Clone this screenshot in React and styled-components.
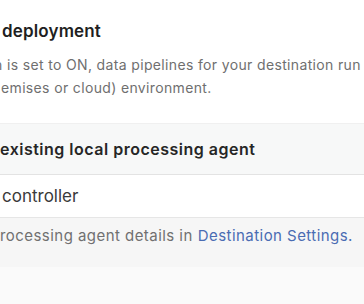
import React from "react";
import styled, { createGlobalStyle } from "styled-components";

const Global = createGlobalStyle`
  html, body { margin: 0; padding: 0; background: #ffffff; }
  body { width: 364px; height: 304px; overflow: hidden; font-family: Inter, "Noto Sans", sans-serif; -webkit-font-smoothing: antialiased; }
`;

const Page = styled.div`
  display: flex;
  flex-direction: column;
  width: 364px;
  height: 304px;
  overflow: hidden;
  background: #fafafa;
`;

const Intro = styled.section`
  background: #ffffff;
  padding: 20px 0 0 0;
  height: 103px;
`;

const Title = styled.h2`
  margin: 0 0 0 2px;
  font-size: 17px;
  line-height: 22px;
  font-weight: 600;
  letter-spacing: 0.15px;
  color: #1f1f1f;
  white-space: nowrap;
`;

const Paragraph = styled.p`
  margin: 11px 0 0 0;
  font-size: 14px;
  line-height: 23px;
  letter-spacing: 0.35px;
  color: #6f6f6f;
  white-space: nowrap;
`;

const Line = styled.span`
  display: block;
  margin-left: ${(p) => p.$indent || 0}px;
`;

const Card = styled.section`
  display: flex;
  flex-direction: column;
  border-top: 1px solid #f0f0f0;
  background: #ffffff;
`;

const CardHeader = styled.div`
  height: 50px;
  display: flex;
  align-items: center;
  background: #f7f8f8;
  border-bottom: 1px solid #e3e3e3;
  font-size: 16px;
  font-weight: 600;
  letter-spacing: 0.5px;
  color: #262626;
  white-space: nowrap;
`;

const AgentRow = styled.div`
  height: 42px;
  display: flex;
  align-items: center;
  padding-left: 2px;
  background: #ffffff;
  border-bottom: 1px solid #e6e6e6;
  font-size: 17px;
  color: #3a3a3a;
  white-space: nowrap;
`;

const Footer = styled.div`
  height: 49px;
  box-sizing: border-box;
  padding-top: 8px;
  line-height: 20px;
  background: #f6f6f6;
  font-size: 15px;
  letter-spacing: 0.45px;
  color: #707070;
  white-space: nowrap;
`;

const Link = styled.a`
  color: #4a6cb3;
  text-decoration: none;
  margin-left: 5px;
`;

export default function App() {
  return (
    <>
      <Global />
      <Page>
        <Intro>
          <Title>deployment</Title>
          <Paragraph>
            <Line $indent={-6}>n is set to ON, data pipelines for your destination run</Line>
            <Line $indent={1}>emises or cloud) environment.</Line>
          </Paragraph>
        </Intro>
        <Card>
          <CardHeader>existing local processing agent</CardHeader>
          <AgentRow>controller</AgentRow>
          <Footer>
            rocessing agent details in<Link href="#">Destination Settings.</Link>
          </Footer>
        </Card>
      </Page>
    </>
  );
}
